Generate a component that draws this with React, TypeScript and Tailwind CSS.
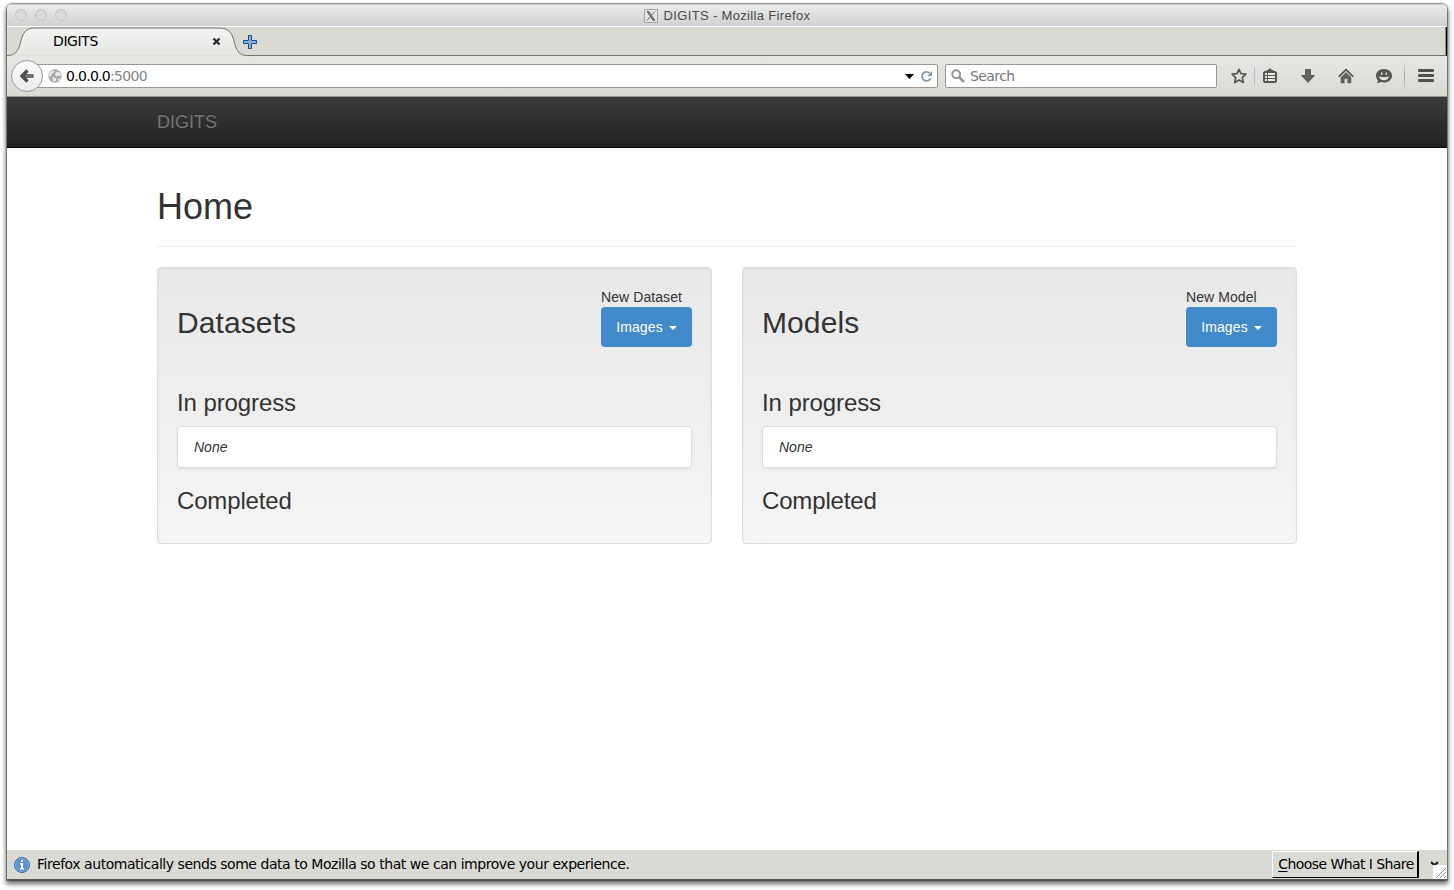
import React from 'react';

const ui = 'font-["DejaVu_Sans",sans-serif]';

function TitleBar() {
  return (
    <div className="relative flex h-[22px] shrink-0 items-center justify-center rounded-t-[4px] border-t border-[#c9c9c9] bg-linear-to-b from-[#ebebeb] to-[#d0d0d0]">
      <div className="absolute left-2 top-[4px] flex gap-2">
        {[0, 1, 2].map((i) => (
          <span key={i} className="h-3 w-3 rounded-full border border-[#c0c0c0] bg-[#dadada]" />
        ))}
      </div>
      <svg className="mr-[6px] h-[14px] w-[14px]" viewBox="0 0 14 14" fill="none">
        <rect x=".5" y=".5" width="13" height="13" fill="#e6e6e6" stroke="#a5a5a5" />
        <path d="M3 2.500 9 11.500h2L5 2.500z" fill="#777" stroke="#555" strokeWidth=".7" />
        <path d="M11 2.500 3 11.500" stroke="#666" />
      </svg>
      <span className='font-["Liberation_Sans",sans-serif] text-[13px] leading-[22px] tracking-[0.340px] text-[#4b4b4b]'>DIGITS - Mozilla Firefox</span>
    </div>
  );
}

function TabStrip() {
  return (
    <div className="relative flex h-[30px] shrink-0 border-t border-white bg-[#dadad5]">
      <svg className="absolute left-0 top-0 h-[29px] w-full" viewBox="0 0 1440 29" fill="none">
        <defs>
          <linearGradient id="tab" x1="0" y1="0" x2="0" y2="1">
            <stop stopColor="#f2f2f0" />
            <stop offset="1" stopColor="#e6e6e3" />
          </linearGradient>
        </defs>
        <path d="M0 28.500h1q9 0 12-11l1.500-6q3-10.500 12-10.500h187q10 0 13 11l1.500 6q3 10.500 10 10.500h2" fill="url(#tab)" />
        <path d="M0 28.500h1q9 0 12-11l1.500-6q3-10.500 12-10.500h187q10 0 13 11l1.500 6q3 10.500 11 10.500H1440" stroke="#73736f" />
        <path d="M1438.500 0v29" stroke="#8c8c84" />
        <path d="M1439.500 0v29" stroke="#000" />
      </svg>
      <div className={`relative ml-[46px] flex w-[169px] items-center justify-between text-[14px] text-black ${ui}`}>
        <span className="tracking-[-0.400px]">DIGITS</span>
        <svg className="mr-px h-[9px] w-[9px]" viewBox="0 0 9 9"><path d="m1.500 1.500 6 6m0-6-6 6" stroke="#292929" strokeWidth="2.300" /></svg>
      </div>
      <svg className="relative ml-[21px] mt-[8px] h-[15px] w-[15px]" viewBox="0 0 15 15">
        <path d="M5.500.5h3v5h5v3h-5v5h-3v-5h-5v-3h5z" fill="#82aee0" stroke="#204a87" />
      </svg>
    </div>
  );
}

function Star() {
  return <svg className="h-4 w-4" viewBox="0 0 16 16"><path d="m8 1.300 2 4.400 4.900.5-3.600 3.400 1 4.900L8 12.100l-4.300 2.400 1-4.900L1.100 6.200 6 5.700z" fill="none" stroke="#555552" strokeWidth="1.700" strokeLinejoin="round" /></svg>;
}
function Clipboard() {
  return <svg className="h-4 w-4" viewBox="0 0 16 16"><path d="M5 2h1l2-2 2 2h1l1 1h1.500L15 4.500v9L13.500 15h-11L1 13.500v-9L2.500 3H4z" fill="#555552" /><path d="M3 5h2v2H3zm3 0h7v2H6zM3 8h2v2H3zm3 0h7v2H6zM3 11h2v2H3zm3 0h7v2H6z" fill="#e7e7e4" /></svg>;
}
function Download() {
  return <svg className="h-4 w-4" viewBox="0 0 16 16"><path d="M5.500 1.500h5v6h4L8 14.500 1.500 7.500h4z" fill="#62625f" stroke="#4d4d4a" strokeWidth=".8" strokeLinejoin="round" /></svg>;
}
function Home() {
  return <svg className="h-4 w-4" viewBox="0 0 16 16"><path d="M.8 8.700 8 1.700l7.200 7" fill="none" stroke="#51514e" strokeWidth="1.700" /><path d="M8 4.600 13 9.300V15H9.700v-4.500H6.300V15H3V9.300z" fill="#62625f" stroke="#51514e" strokeWidth=".5" /></svg>;
}
function Smile() {
  return (
    <svg className="h-4 w-4" viewBox="0 0 16 16">
      <path d="M8 1c4.500 0 8 2.800 8 6.700s-3.500 6.800-8 6.800c-1 0-2-.1-2.900-.4L1 15.300l1-2.900C.7 11.200 0 9.600 0 7.700 0 3.800 3.500 1 8 1z" fill="#555552" />
      <path d="M3 8.500q5 1.500 10 0c-.4 2.400-2.400 3.800-5 3.800S3.400 10.900 3 8.500z" fill="#e7e7e4" />
      <path d="M5 4.500h1.500v2.300H5zm4.500 0H11v2.300H9.500z" fill="#e7e7e4" />
    </svg>
  );
}

function Toolbar() {
  return (
    <div className={`relative flex h-[41px] shrink-0 items-center border-b border-[#98958e] bg-linear-to-b from-[#e6e6e3] to-[#dadad5] text-[14px] ${ui}`}>
      <div className="relative z-10 ml-[4px] flex h-8 w-8 shrink-0 items-center justify-center rounded-full border border-[#929ba5] bg-linear-to-b from-[#fcfcfb] to-[#eaeae8]">
        <svg className="h-4 w-4" viewBox="0 0 16 16"><path d="M8.500 2.500 3 8l5.500 5.500M3.500 8H14.500" fill="none" stroke="#4d4d4a" strokeWidth="3.300" /><path d="M6 8h7.500" stroke="#777" strokeWidth="1.600" /></svg>
      </div>
      <div className="ml-[-8px] flex h-6 w-[903px] shrink-0 items-center rounded-[2px] border border-[#9b9790] bg-white pl-[12px]">
        <svg className="h-[14px] w-[14px]" viewBox="0 0 14 14"><circle cx="7" cy="7" r="6.700" fill="#a9a9a9" /><path d="M2 3.200 5 1.200 6.700 2 5.500 4l-2 .7.800 1.500-2 .6-.8 2.200C.9 7 1 5 2 3.200zM7.500 4l2-1.800 2.700 1.800 1 3.500-2.500-1L8.300 7.600 7 6zM4.500 8l3 .8 1 1.700-2 2.700-1.800-1.700zm6.300 1.200 2 .3-2 2.700-.8-1.500z" fill="#e8e8e8" /></svg>
        <span className="ml-[4px] text-[14px] tracking-[-0.700px] text-black">0.0.0.0<span className="text-[#858585]">:5000</span></span>
        <svg className="ml-auto h-[5px] w-[9px]" viewBox="0 0 9 5"><path d="M0 0h9L4.500 5z" fill="#000" /></svg>
        <svg className="ml-[6px] mr-[4px] h-[13px] w-[13px]" viewBox="0 0 13 13"><path d="M9.800 3.200A4.500 4.500 0 1 0 10.800 8" fill="none" stroke="#8a9cab" strokeWidth="1.900" /><path d="M7 6.200h5V1z" fill="#8a9cab" /></svg>
      </div>
      <div className="ml-[7px] flex h-6 w-[272px] shrink-0 items-center rounded-[2px] border border-[#9b9790] bg-white pl-[5px]">
        <svg className="h-[14px] w-[14px]" viewBox="0 0 14 14"><circle cx="5.200" cy="5.200" r="3.900" fill="none" stroke="#969696" strokeWidth="2" /><path d="m8 8 5 5" stroke="#969696" strokeWidth="2.500" /></svg>
        <span className="ml-[5px] text-[14px] tracking-[-0.600px] text-[#777]">Search</span>
      </div>
      <div className="ml-[14px] flex shrink-0 items-center">
        <Star />
        <span className="ml-[7px] mr-[7px] h-[18px] w-px bg-[#b6bbc0]" />
        <Clipboard />
        <span className="w-[22px]" /><Download />
        <span className="w-[22px]" /><Home />
        <span className="w-[22px]" /><Smile />
        <span className="ml-[12px] mr-[13px] h-8 w-px bg-linear-to-b from-transparent via-[#98a4b4] to-transparent" />
        <div className="mb-px flex w-4 flex-col gap-[2px]">
          {[0, 1, 2].map((i) => <span key={i} className="h-[3px] rounded-[1px] bg-[#50504d]" />)}
        </div>
      </div>
    </div>
  );
}

function Well({ title, action }: { title: string; action: string }) {
  return (
    <section className="flex h-[277px] w-[555px] flex-col rounded-[4px] border border-[#dcdcdc] bg-linear-to-b from-[#e8e8e8] to-[#f5f5f5] px-[19px] pt-[19px] shadow-[inset_0_1px_3px_rgba(0,0,0,0.05),0_1px_0_rgba(255,255,255,0.1)]">
      <div className="flex items-start justify-between">
        <h2 className="mt-[19px] text-[30px] leading-[33px] tracking-[0.100px]">{title}</h2>
        <div className="w-[91px] whitespace-nowrap text-[14px] leading-5">
          <div className="tracking-[0.080px]">{action}</div>
          <button className="flex h-10 w-[91px] items-center justify-center rounded-[4px] bg-[#428bca] text-white">
            <span className="tracking-[0.100px]">Images</span>
            <svg className="ml-[6px] mt-[2px] h-1 w-2" viewBox="0 0 8 4"><path d="M0 0h8L4 4z" fill="#fff" /></svg>
          </button>
        </div>
      </div>
      <h3 className="mt-[43px] text-[24px] leading-[26px] tracking-[-0.100px]">In progress</h3>
      <div className="mt-[10px] flex h-[42px] shrink-0 items-center rounded-[4px] border border-[#dddddd] bg-white pl-[16px] text-[14px] italic shadow-[0_1px_2px_rgba(0,0,0,0.075)]">None</div>
      <h3 className="mt-[20px] text-[24px] leading-[26px] tracking-[-0.160px]">Completed</h3>
    </section>
  );
}

export default function App() {
  return (
    <div className="h-[890px] w-[1454px] overflow-hidden bg-white pl-[7px] pt-[4px]">
      <div className="flex h-[876px] w-[1440px] flex-col rounded-t-[5px] border-b border-[#555] bg-white shadow-[0_0_1px_1px_rgba(0,0,0,0.35),0_3px_5px_1px_rgba(0,0,0,0.6)]">
        <TitleBar />
        <TabStrip />
        <Toolbar />
        <nav className='flex h-[51px] shrink-0 items-center border-b border-[#080808] bg-linear-to-b from-[#3c3c3c] to-[#222] pl-[150px] font-["Liberation_Sans",sans-serif] text-[18px] text-[#777]'>
          <span className="[text-shadow:0_-1px_0_rgba(0,0,0,0.25)]">DIGITS</span>
        </nav>
        <main className='flex grow flex-col px-[150px] font-["Liberation_Sans",sans-serif] text-[#333]'>
          <h1 className="mt-[39px] h-[60px] border-b border-[#eee] text-[36px] leading-[40px]">Home</h1>
          <div className="mt-5 flex justify-between">
            <Well title="Datasets" action="New Dataset" />
            <Well title="Models" action="New Model" />
          </div>
        </main>
        <footer className={`relative flex h-[29px] shrink-0 items-center bg-[#dadad5] text-[14px] text-black ${ui}`}>
          <svg className="ml-[7px] h-4 w-4" viewBox="0 0 16 16"><circle cx="8" cy="8" r="7.500" fill="#5b92cd" stroke="#3468a4" /><circle cx="8" cy="8" r="6.500" fill="none" stroke="#86afdc" /><path d="M7 3h2v2H7zM6 6h3v5h1v1.500H6V11h1V7.500H6z" fill="#fff" /></svg>
          <span className="ml-[7px] whitespace-nowrap tracking-[-0.460px]">Firefox automatically sends some data to Mozilla so that we can improve your experience.</span>
          <button className="ml-auto mr-[28px] h-[27px] w-[147px] whitespace-nowrap border-b border-r-2 border-l border-t border-b-black border-l-white border-r-black border-t-white pl-[2px] tracking-[-0.580px]"><span className="underline underline-offset-2">C</span>hoose What I Share</button>
          <svg className="absolute right-[8px] top-[11px] h-[7px] w-[9px]" viewBox="0 0 9 7"><path d="M1 1.200 4.500 4 8 1.200" fill="none" stroke="#222" strokeWidth="2.200" /></svg>
          <svg className="absolute bottom-0 right-0 h-[14px] w-[14px]" viewBox="0 0 14 14"><path d="M0 0h14v14H0z" fill="#fff" /><path d="M3 13 13 3M7 13l6-6M11 13l2-2" stroke="#888" /></svg>
        </footer>
      </div>
    </div>
  );
}
